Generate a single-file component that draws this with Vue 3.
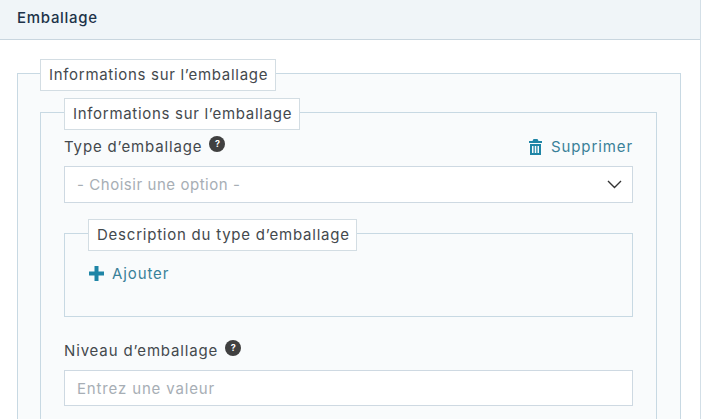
<script setup>
</script>

<template>
  <div class="page">
    <header class="head">Emballage</header>
    <div class="body">
      <fieldset class="fs outer">
        <legend class="lg">Informations sur l’emballage</legend>
        <fieldset class="fs">
          <legend class="lg">Informations sur l’emballage</legend>
          <div class="row">
            <span class="label">Type d’emballage <span class="help">?</span></span>
            <a class="link del">
              <svg width="13" height="16" viewBox="0 0 13 16"><path fill="#1f85a6" fill-rule="evenodd" d="M4.500 0h4l1 2H13v2H0V2h3.500zM1 5h11v11H1zM3 7v7h1.500V7zM5.750 7v7h1.500V7zM8.500 7v7H10V7z"/></svg>
              Supprimer
            </a>
          </div>
          <div class="field select">
            <span>- Choisir une option -</span>
            <svg class="chev" width="15" height="9" viewBox="0 0 15 9"><path d="M1 1l6.500 6.500L14 1" fill="none" stroke="#333" stroke-width="1.400"/></svg>
          </div>
          <fieldset class="fs inner">
            <legend class="lg wide">Description du type d’emballage</legend>
            <a class="link add">
              <svg width="15" height="15" viewBox="0 0 15 15"><path fill="#1f85a6" d="M5.500 0h4v5.500H15v4H9.500V15h-4V9.500H0v-4h5.500z"/></svg>
              Ajouter
            </a>
          </fieldset>
          <div class="label second">Niveau d’emballage <span class="help">?</span></div>
          <div class="field value"><span>Entrez une valeur</span></div>
        </fieldset>
      </fieldset>
    </div>
  </div>
</template>

<style>
html, body { margin: 0; background: #fff; overflow: hidden; }
</style>

<style scoped>
.page {
  width: 701px;
  height: 419px;
  box-sizing: border-box;
  border-right: 1px solid #d3dfe7;
  overflow: hidden;
  font-family: Inter, "Open Sans", sans-serif;
  font-size: 15px;
  letter-spacing: 0.7px;
  color: #44494d;
}
.head {
  height: 39px;
  line-height: 36px;
  padding-left: 17px;
  background: #f0f5f8;
  border-bottom: 1px solid #c9d6df;
  color: #1d3349;
  font-weight: 500;
}
.body { padding: 17px 19px 0 17px; }
.fs {
  margin: 0;
  min-width: 0;
  padding: 9px 23px 20px 23px;
  border: 1px solid #c8d9e3;
  background: #f9fbfc;
}
.outer { padding-top: 7px; padding-left: 22px; padding-bottom: 40px; }
.lg {
  box-sizing: border-box;
  height: 32px;
  line-height: 30px;
  padding: 0 7px 0 8px;
  background: #fff;
  border: 1px solid #d3dde3;
  transform: translateY(2px);
}
.wide { letter-spacing: 0.77px; padding-right: 6px; }
.row {
  display: flex;
  justify-content: space-between;
  align-items: flex-start;
  height: 29px;
  line-height: 20px;
}
.label { display: block; letter-spacing: 0.85px; }
.help {
  display: inline-block;
  position: relative;
  top: -2px;
  width: 16px;
  height: 16px;
  margin-left: 2px;
  vertical-align: 3px;
  border-radius: 50%;
  background: #404040;
  color: #fff;
  font-size: 9px;
  font-weight: 700;
  letter-spacing: 0;
  line-height: 16px;
  text-align: center;
}
.link {
  display: flex;
  align-items: center;
  color: #3a8199;
  letter-spacing: 0.9px;
}
.del { gap: 9px; }
.add { gap: 8px; height: 30px; padding-left: 1px; }
.field {
  box-sizing: border-box;
  height: 37px;
  display: flex;
  align-items: center;
  justify-content: space-between;
  padding: 0 10px 0 12px;
  background: #fff;
  border: 1px solid #ced9e2;
  color: #a7aeb5;
}
.select { letter-spacing: 0.55px; }
.value { height: 36px; letter-spacing: 0.85px; }
.inner { margin-top: 14px; padding-bottom: 0; height: 100px; box-sizing: border-box; }
.second { margin-top: 22px; height: 31px; line-height: 24px; }
</style>
